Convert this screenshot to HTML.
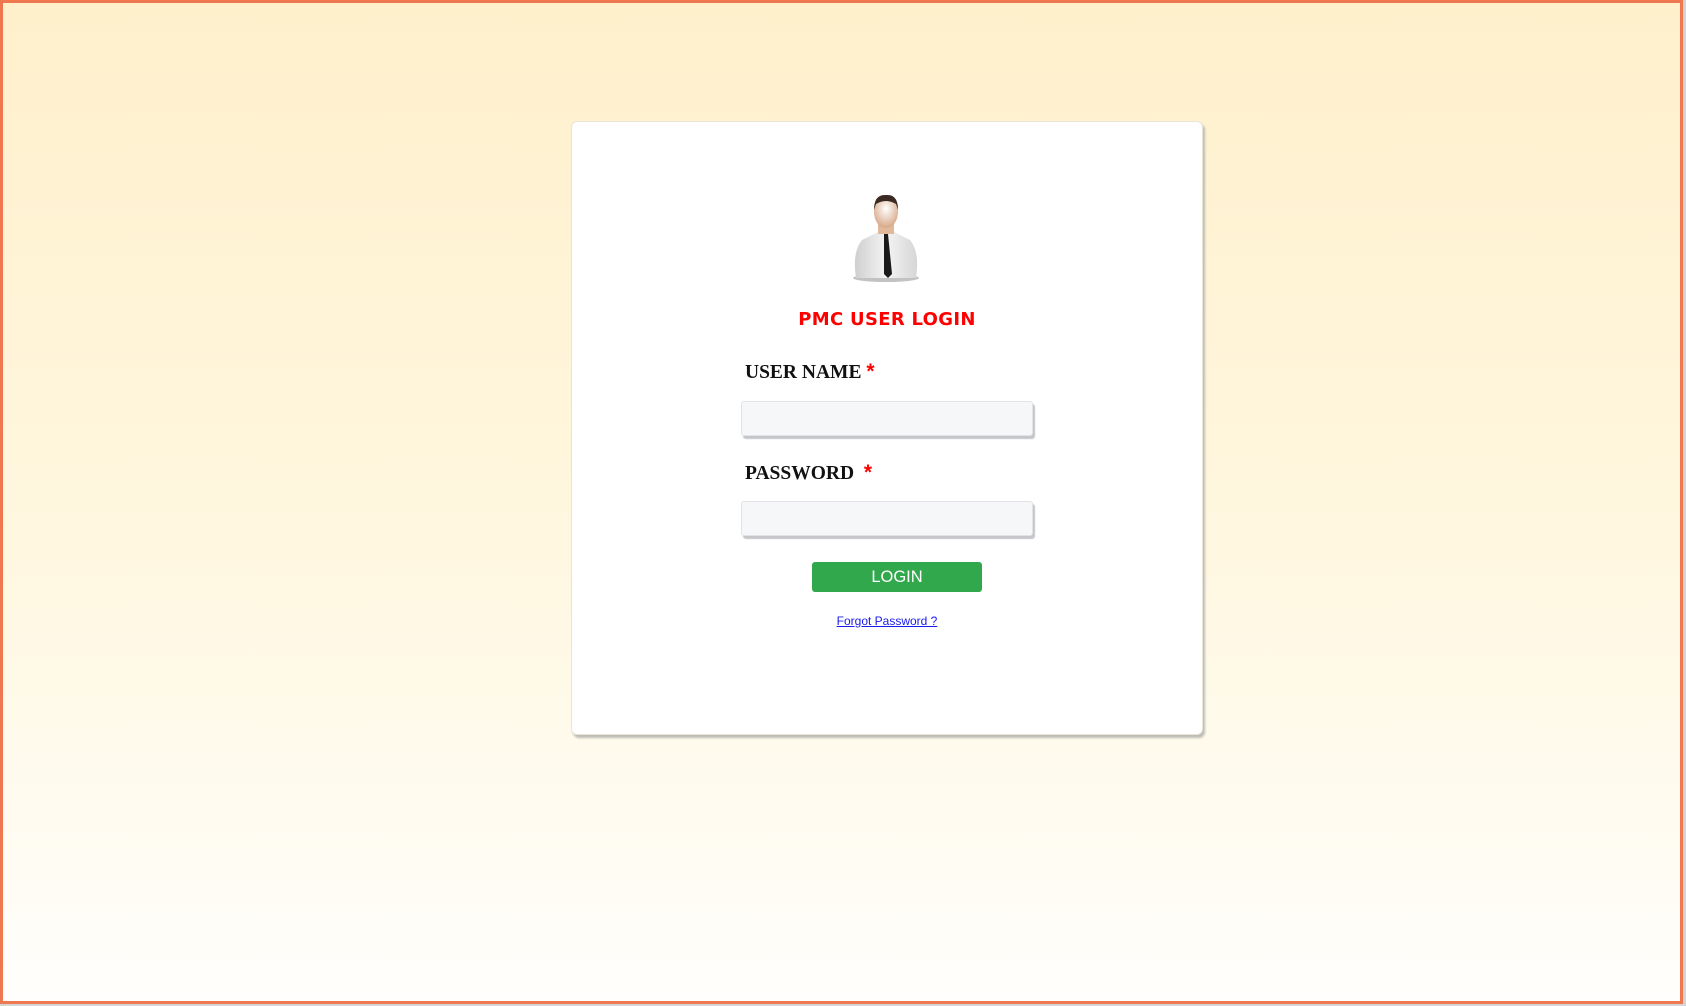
<!DOCTYPE html>
<html><head><meta charset="utf-8"><style>
html,body{margin:0;padding:0;width:1686px;height:1006px;overflow:hidden;background:#d4d4d4;font-family:"Liberation Sans",sans-serif}
.frame{position:absolute;left:0;top:0;width:1677px;height:998px;border:3px solid #f07850;background:linear-gradient(#fff0cc 0%,#fff7e0 55%,#fffefc 100%)}
.card{position:absolute;left:571px;top:121px;width:630px;height:612px;background:#fff;border-radius:6px;border:1px solid #e8e4d8;box-shadow:2px 3px 2px #bdbdb5}
.title{position:absolute;left:0;width:100%;top:187px;text-align:center;color:#f00;font-family:"Comic Sans MS","DejaVu Sans",sans-serif;font-weight:bold;font-size:18px;letter-spacing:0.3px}
.lbl{position:absolute;left:173px;font-family:"Liberation Serif",serif;font-weight:bold;font-size:19.5px;color:#111}
.lbl span{color:#f00;font-family:"Liberation Sans",sans-serif;font-size:21px}
.inp{position:absolute;left:169px;width:290px;height:33px;background:#f6f7f9;border:1px solid #e2e3e6;border-radius:3px;box-shadow:2px 3px 1px #c4c6ca}
.btn{position:absolute;left:240px;top:440px;width:170px;height:30px;background:#32a84c;border-radius:3px;color:#fff;text-align:center;line-height:30px;font-size:16.5px}
.fp{position:absolute;left:0;width:100%;top:492px;text-align:center;font-size:12px;color:#1a1aee;text-decoration:underline}
</style></head><body>
<div class="frame"></div>
<div class="card">
<svg style="position:absolute;left:276px;top:70px" width="76" height="92" viewBox="0 0 76 92">
<defs><radialGradient id="f" cx="50%" cy="40%" r="60%"><stop offset="0" stop-color="#fff"/><stop offset="1" stop-color="#d8a888"/></radialGradient>
<linearGradient id="s" x1="0" x2="1"><stop offset="0" stop-color="#cfcfcf"/><stop offset=".5" stop-color="#f4f4f4"/><stop offset="1" stop-color="#d6d6d6"/></linearGradient></defs>
<ellipse cx="38" cy="86" rx="33" ry="4" fill="#999" opacity=".6"/>
<path d="M8 86 Q4 60 14 48 L30 40 L46 40 L62 48 Q72 60 68 86 Z" fill="url(#s)"/>
<rect x="30" y="30" width="16" height="12" fill="#e2b89a"/>
<ellipse cx="38" cy="20" rx="12" ry="16" fill="url(#f)"/>
<path d="M26 18 Q26 2 38 3 Q50 2 50 18 L48 12 Q38 6 28 12 Z" fill="#3a2a22"/>
<path d="M36 42 L40 42 L44 82 L40 86 L36 82 Z" fill="#1a1a1a"/>
</svg>
<div class="title">PMC USER LOGIN</div>
<div class="lbl" style="top:238px">USER NAME <span>*</span></div>
<div class="inp" style="top:279px"></div>
<div class="lbl" style="top:339px">PASSWORD &nbsp;<span>*</span></div>
<div class="inp" style="top:379px"></div>
<div class="btn">LOGIN</div>
<div class="fp">Forgot Password ?</div>
</div>
</body></html>
